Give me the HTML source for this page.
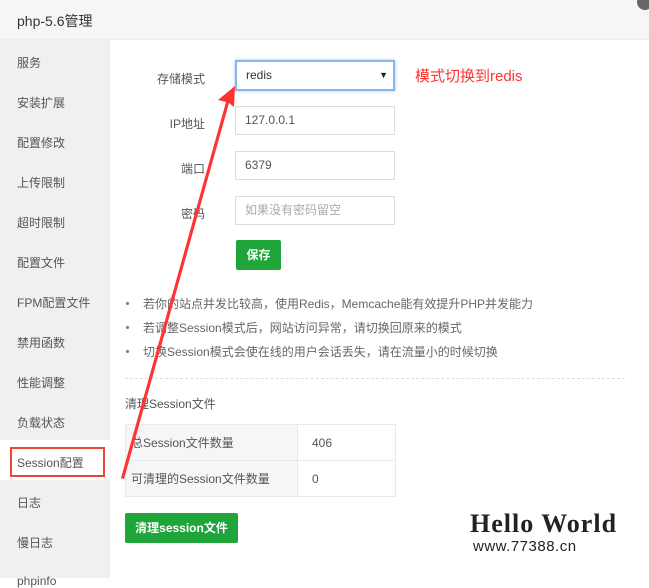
<!DOCTYPE html>
<html><head><meta charset="utf-8"><style>
*{box-sizing:border-box;margin:0;padding:0}
body{width:649px;height:578px;overflow:hidden;background:#fff;font-family:"Liberation Sans","Noto Sans CJK SC",sans-serif;font-size:12px;color:#555;position:relative}
.hd{position:absolute;left:0;top:0;width:649px;height:40px;background:#f6f6f6;border-bottom:1px solid #eee}
.hd span{position:absolute;left:17px;top:11px;font-size:14px;color:#333}
.close{position:absolute;left:637px;top:-6px;width:16px;height:16px;border-radius:50%;background:#666}
.sb{position:absolute;left:0;top:40px;width:110px;height:538px;background:#f0f0f0}
.sb div{position:absolute;left:17px;font-size:12px;color:#555}
.act{position:absolute;left:0;top:440px;width:110px;height:40px;background:#fff}
.redbox{position:absolute;left:10px;top:447px;width:95px;height:30px;border:2px solid #e43}
.lbl{position:absolute;width:80px;text-align:right;left:125px;color:#555}
.in{position:absolute;left:235px;width:160px;height:29px;border:1px solid #ddd;padding-left:9px;line-height:27px;color:#555}
.btn{position:absolute;background:#20a53a;color:#fff;font-weight:bold;text-align:center;border-radius:2px}
.li{position:absolute;left:143px;color:#666}
.li:before{content:"";position:absolute;left:-17px;top:7px;width:3px;height:3px;background:#777;border-radius:50%}
table{position:absolute;left:125px;top:424px;border-collapse:collapse}
td{border:1px solid #e8e8e8;height:36px;padding-left:5px;color:#555}
</style></head><body>
<div class="hd"><span>php-5.6管理</span></div>
<div class="close"></div>
<div class="sb">
<div style="top:14px">服务</div><div style="top:54px">安装扩展</div><div style="top:94px">配置修改</div><div style="top:134px">上传限制</div><div style="top:174px">超时限制</div><div style="top:214px">配置文件</div><div style="top:254px">FPM配置文件</div><div style="top:294px">禁用函数</div><div style="top:334px">性能调整</div><div style="top:374px">负载状态</div>
</div>
<div class="act"></div>
<div class="sb" style="background:none"><div style="top:414px">Session配置</div><div style="top:454px">日志</div><div style="top:494px">慢日志</div><div style="top:534px">phpinfo</div></div>
<div class="redbox"></div>
<div class="lbl" style="top:70px">存储模式</div>
<div class="in" style="top:60px;height:31px;border:2px solid #8ab4f0;box-shadow:0 0 3px #9bc2f5;color:#333">redis<span style="position:absolute;right:5px;font-size:9px;color:#222">▼</span></div>
<div style="position:absolute;left:415px;top:65px;font-size:15px;color:#f33">模式切换到redis</div>
<div class="lbl" style="top:115px">IP地址</div><div class="in" style="top:106px">127.0.0.1</div>
<div class="lbl" style="top:160px">端口</div><div class="in" style="top:151px">6379</div>
<div class="lbl" style="top:205px">密码</div><div class="in" style="top:196px;color:#aaa">如果没有密码留空</div>
<div class="btn" style="left:236px;top:240px;width:45px;height:30px;line-height:30px">保存</div>
<div class="li" style="top:295px">若你的站点并发比较高，使用Redis，Memcache能有效提升PHP并发能力</div>
<div class="li" style="top:319px">若调整Session模式后，网站访问异常，请切换回原来的模式</div>
<div class="li" style="top:343px">切换Session模式会使在线的用户会话丢失，请在流量小的时候切换</div>
<div style="position:absolute;left:125px;top:378px;width:500px;border-top:1px dashed #ddd"></div>
<div style="position:absolute;left:125px;top:395px;color:#555">清理Session文件</div>
<table><tr><td style="width:172px;background:#f6f6f6">总Session文件数量</td><td style="width:98px;padding-left:14px">406</td></tr>
<tr><td style="background:#f6f6f6">可清理的Session文件数量</td><td style="padding-left:14px">0</td></tr></table>
<div class="btn" style="left:125px;top:513px;width:113px;height:30px;line-height:30px">清理session文件</div>
<div style="position:absolute;left:470px;top:509px;font-family:'Liberation Serif',serif;font-weight:bold;font-size:26px;color:#222;letter-spacing:1px">Hello World</div>
<div style="position:absolute;left:473px;top:538px;font-size:15px;color:#222;letter-spacing:0.5px">www.77388.cn</div>
<svg style="position:absolute;left:0;top:0" width="649" height="578"><polygon points="121,478 226,102 218,100 235,86 234,107 229,103 124,479" fill="#f33"/></svg>
</body></html>
